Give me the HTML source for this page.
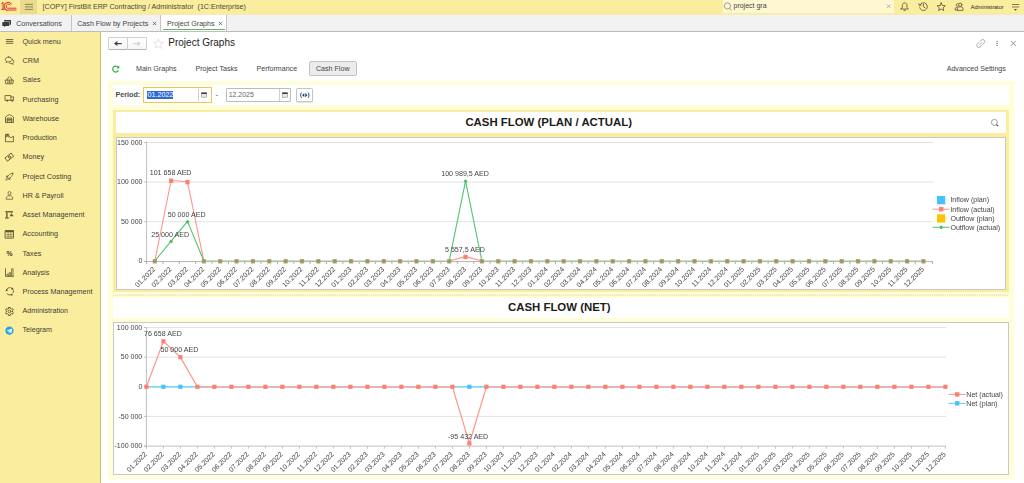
<!DOCTYPE html>
<html><head><meta charset="utf-8"><title>Project Graphs</title>
<style>
html,body{margin:0;padding:0;}
body{width:1024px;height:483px;overflow:hidden;background:#fff;font-family:"Liberation Sans", Arial, sans-serif;font-size:7.1px;color:#3b3b3b;position:relative;}
div,span{position:absolute;white-space:nowrap;box-sizing:border-box;}
svg{position:absolute;overflow:visible;}
#top{left:0;top:0;width:1024px;height:15px;background:linear-gradient(#fbed9e 0,#fbed9e 13.4px,#f6e595 14px,#f4ecc4 14.6px,#f2f2f2 15px);}
#hamb{left:20px;top:0;width:17px;height:14px;background:#eadb8e;}
#ttl{left:42.5px;top:3px;font-size:7.15px;color:#4a4a3a;line-height:8px;}
#search{left:723px;top:0;width:171px;height:13px;background:#fef7d1;}
#stext{left:733.5px;top:2.0px;font-size:7px;line-height:8px;color:#444;}
#adm{left:970.7px;top:3.6px;font-size:5.6px;line-height:7px;color:#1e1e1e;}
#tabs{left:0;top:15px;width:1024px;height:17px;background:#f2f2f2;border-bottom:1px solid #bdbdbd;}
.tsep{top:15px;width:1px;height:16px;background:#c4c4c4;}
#tabact{left:161.4px;top:15px;width:64.6px;height:16px;background:#fff;}
#tabul{left:163px;top:28.8px;width:62px;height:1.6px;background:#5db761;}
.tt{top:19.8px;font-size:7.15px;line-height:8px;color:#444;}
#side{left:0;top:32px;width:100px;height:451px;background:#fbed9e;}
#sideb{left:100px;top:32px;width:1px;height:451px;background:#c9ba6c;}
.si{left:22.5px;font-size:7.2px;line-height:10px;height:10px;color:#403e34;}
.sic{left:3.1px;}
#nav{left:107.5px;top:37px;width:39px;height:13px;border:1px solid #d0d0d0;border-bottom-color:#b4b4b4;border-radius:1.5px;background:linear-gradient(#fff,#f6f6f6);}
#navd{left:127.3px;top:37.5px;width:1px;height:12px;background:#d0d0d0;}
#ptitle{left:168.3px;top:36.3px;font-size:10px;line-height:13px;color:#222;}
.pt{top:64.6px;font-size:7.1px;line-height:8px;color:#444;}
#cfbtn{left:309px;top:61px;width:48px;height:15px;background:#ececec;border:1px solid #c2c2c2;border-radius:2px;}
#y1{left:108px;top:81px;width:906px;height:398px;background:#fffed9;}
#prow{left:113px;top:85px;width:896px;height:20px;background:#fff;}
#plabel{left:115.5px;top:91px;font-size:7.2px;line-height:8px;font-weight:bold;color:#4a4a4a;}
#in1{left:143.2px;top:87px;width:69px;height:16px;border:1.2px solid #f4c544;background:#fff;border-radius:0.5px;}
#in1s{left:147px;top:90.7px;width:26px;height:8.3px;background:#2f6ad0;}
#in1t{left:147.6px;top:91px;font-size:7.2px;line-height:8px;color:#fff;}
#in1d{left:198.3px;top:89px;width:1px;height:12px;background:#cfcfcf;}
#dash{left:215.5px;top:90.5px;font-size:7.2px;line-height:8px;}
#in2{left:226px;top:88.2px;width:64.7px;height:13.6px;border:1px solid #bcbcbc;background:#fff;border-radius:1px;}
#in2t{left:228.7px;top:91px;font-size:6.95px;line-height:8px;color:#666;}
#in2d{left:279.4px;top:89px;width:1px;height:12px;background:#cfcfcf;}
#pbtn{left:296.3px;top:87.5px;width:16.5px;height:14px;border:1px solid #c3c3c3;border-radius:1.5px;background:#fff;box-shadow:0 0.6px 0.5px rgba(0,0,0,.2);}
#f1{left:113px;top:110px;width:896px;height:182px;background:#fced9e;}
#t1{left:116px;top:112.4px;width:889.5px;height:20.2px;background:#fff;}
#t1t{left:465.4px;top:115.5px;font-size:11.4px;line-height:13px;font-weight:bold;color:#1c1c1c;}
#c1{left:115.5px;top:137.2px;width:890.3px;height:152.6px;background:#fff;border:1px solid #c8c8c8;}
#dots{left:113px;top:294.5px;width:896px;height:1.4px;background:repeating-linear-gradient(90deg,#e4dfb6 0 1.25px,#fffed9 1.25px 2.133px);}
#t2{left:113px;top:297.6px;width:896px;height:20.2px;background:#fff;}
#t2t{left:508px;top:300.5px;font-size:11.4px;line-height:13px;font-weight:bold;color:#1c1c1c;}
#c2{left:113px;top:322.3px;width:895.8px;height:152.3px;background:#fff;border:1px solid #c8c8c8;}
text.ax{font-size:7.05px;fill:#444;}
text.dl{font-size:7.1px;fill:#444;}
text.lg{font-size:7.1px;fill:#444;}
</style></head><body>
<div id="top"></div><div id="hamb"></div>
<div id="ttl">[COPY] FirstBit ERP Contracting / Administrator&nbsp; (1C:Enterprise)</div>
<div id="search"></div><div id="stext">project gra</div><div id="adm">Administrator</div>
<div id="tabs"></div>
<div class="tsep" style="left:71px"></div><div class="tsep" style="left:160.4px"></div><div class="tsep" style="left:226px"></div>
<div id="tabact"></div><div id="tabul"></div>
<div class="tt" style="left:16.2px">Conversations</div>
<div class="tt" style="left:77.2px">Cash Flow by Projects</div>
<div class="tt" style="left:167px">Project Graphs</div>
<div id="side"></div><div id="sideb"></div>
<div class="si" style="top:37.00px">Quick menu</div>
<svg class="sic" style="top:35.00px" width="12.9" height="12.9" viewBox="0 0 14 14"><path d="M3.1 4.95H11.1M3.1 6.97H11.1M3.1 9.0H11.1" fill="none" stroke="#5b5530" stroke-width="0.95"/></svg>
<div class="si" style="top:56.23px">CRM</div>
<svg class="sic" style="top:54.43px" width="12.9" height="12.9" viewBox="0 0 14 14"><path d="M6.2 3.3C8.4 3.3 9.9 4.5 9.9 6.0C9.9 7.5 8.4 8.6 6.2 8.6C5.7 8.6 5.3 8.55 4.9 8.45L3.3 9.4L3.8 7.9C3 7.4 2.5 6.8 2.5 6.0C2.5 4.5 4 3.3 6.2 3.3Z" fill="none" stroke="#5b5530" stroke-width="0.9" stroke-linecap="round" stroke-linejoin="round"/><path d="M10.4 6.2C11.2 6.6 11.7 7.3 11.7 8.1C11.7 8.9 11.3 9.5 10.6 9.9L11.1 11.2L9.5 10.4C8.6 10.6 7.4 10.4 6.7 9.6" fill="none" stroke="#5b5530" stroke-width="0.9" stroke-linecap="round" stroke-linejoin="round"/></svg>
<div class="si" style="top:75.46px">Sales</div>
<svg class="sic" style="top:74.06px" width="12.9" height="12.9" viewBox="0 0 14 14"><path d="M2.8 6.6H11.3L10.7 10.6H3.4Z" fill="none" stroke="#5b5530" stroke-width="0.9" stroke-linecap="round" stroke-linejoin="round"/><path d="M4.3 6.4L6.2 3.2M9.8 6.4L7.9 3.2M5.3 7.4V9.8M7.05 7.4V9.8M8.8 7.4V9.8" fill="none" stroke="#5b5530" stroke-width="0.9" stroke-linecap="round" stroke-linejoin="round"/></svg>
<div class="si" style="top:94.69px">Purchasing</div>
<svg class="sic" style="top:92.49px" width="12.9" height="12.9" viewBox="0 0 14 14"><path d="M2.6 3.9H8.6V9H2.6ZM8.6 5.3H11.5V9H8.6" fill="none" stroke="#5b5530" stroke-width="0.9" stroke-linecap="round" stroke-linejoin="round"/><circle cx="4.6" cy="9.4" r="1" fill="#5b5530"/><circle cx="10.1" cy="9.4" r="1" fill="#5b5530"/></svg>
<div class="si" style="top:113.92px">Warehouse</div>
<svg class="sic" style="top:111.92px" width="12.9" height="12.9" viewBox="0 0 14 14"><path d="M2.7 11V5.6C4 4.2 5.5 3.3 7.05 2.9C8.6 3.3 10.1 4.2 11.4 5.6V11Z" fill="none" stroke="#5b5530" stroke-width="0.9" stroke-linecap="round" stroke-linejoin="round"/><path d="M4.6 11V6.6H9.5V11M4.6 8.1H9.5M4.6 9.6H9.5" fill="none" stroke="#5b5530" stroke-width="0.9" stroke-linecap="round" stroke-linejoin="round"/></svg>
<div class="si" style="top:133.15px">Production</div>
<svg class="sic" style="top:131.35px" width="12.9" height="12.9" viewBox="0 0 14 14"><path d="M2.7 11.2V3.6H6.3V5.4L8.6 7.3L11.4 5.7V11.2Z" fill="none" stroke="#5b5530" stroke-width="0.9" stroke-linecap="round" stroke-linejoin="round"/><path d="M4.1 3.6V5.2M5.2 3.6V5.2M2.7 6.6L4.5 5.3L6.3 6.6" fill="none" stroke="#5b5530" stroke-width="0.9" stroke-linecap="round" stroke-linejoin="round"/></svg>
<div class="si" style="top:152.38px">Money</div>
<svg class="sic" style="top:150.18px" width="12.9" height="12.9" viewBox="0 0 14 14"><g transform="translate(0 0.6) rotate(-38 7 7)"><rect x="2.9" y="4.8" width="8.2" height="4.4" fill="none" stroke="#5b5530" stroke-width="0.9" stroke-linecap="round" stroke-linejoin="round"/><circle cx="7" cy="7" r="1.2" fill="none" stroke="#5b5530" stroke-width="0.9" stroke-linecap="round" stroke-linejoin="round"/></g></svg>
<div class="si" style="top:171.61px">Project Costing</div>
<svg class="sic" style="top:169.81px" width="12.9" height="12.9" viewBox="0 0 14 14"><g transform="translate(0.5 0.9) scale(0.9)"><path d="M11.3 2.9C9.3 3 7.6 3.8 6.2 5.4L4.5 7.6L6.5 9.6L8.7 7.9C10.3 6.5 11.2 4.9 11.3 2.9Z" fill="none" stroke="#5b5530" stroke-width="0.9" stroke-linecap="round" stroke-linejoin="round"/><path d="M5.6 6.2L3.1 6.6L4.4 7.7M7.9 8.5L7.5 11L6.4 9.7M4.6 9.5L3 11.1M3.6 8.7L2.7 9.6M5.4 10.4L4.5 11.3" fill="none" stroke="#5b5530" stroke-width="0.9" stroke-linecap="round" stroke-linejoin="round"/></g></svg>
<div class="si" style="top:190.84px">HR &amp; Payroll</div>
<svg class="sic" style="top:188.84px" width="12.9" height="12.9" viewBox="0 0 14 14"><circle cx="7.05" cy="4.5" r="1.7" fill="none" stroke="#5b5530" stroke-width="0.8"/><path d="M3.6 11.1V8.9L5.3 7.4H8.8L10.5 8.9V11.1Z" fill="none" stroke="#5b5530" stroke-width="0.8" stroke-linejoin="round"/></svg>
<div class="si" style="top:210.07px">Asset Management</div>
<svg class="sic" style="top:208.07px" width="12.9" height="12.9" viewBox="0 0 14 14"><path d="M2.5 3.4H10.8V4.8H2.5Z" fill="#5b5530"/><path d="M4.2 4.8V10.3" fill="none" stroke="#5b5530" stroke-width="1.5"/><path d="M2.3 10.2H6.3V11.5H2.3Z" fill="#5b5530"/><path d="M9.1 4.8V7" fill="none" stroke="#5b5530" stroke-width="0.7"/><path d="M7 8.9L8.5 6.9H9.9L11.6 8.9Z" fill="#5b5530"/></svg>
<div class="si" style="top:229.30px">Accounting</div>
<svg class="sic" style="top:227.30px" width="12.9" height="12.9" viewBox="0 0 14 14"><g transform="translate(0 0.95)"><rect x="2.7" y="2.9" width="8.7" height="8.3" fill="none" stroke="#5b5530" stroke-width="0.9" stroke-linecap="round" stroke-linejoin="round"/><rect x="2.7" y="2.9" width="8.7" height="1.9" fill="#5b5530"/><path d="M2.7 7H11.4M2.7 9.1H11.4M5.6 4.8V11.2M8.5 4.8V11.2" fill="none" stroke="#5b5530" stroke-width="0.55"/></g></svg>
<div class="si" style="top:248.53px">Taxes</div>
<svg class="sic" style="top:246.53px" width="12.9" height="12.9" viewBox="0 0 14 14"><text x="7.1" y="10.0" text-anchor="middle" font-size="7.4" font-weight="bold" fill="#3d3820">%</text></svg>
<div class="si" style="top:267.76px">Analysis</div>
<svg class="sic" style="top:265.76px" width="12.9" height="12.9" viewBox="0 0 14 14"><path d="M2.7 2.9V11.2H11.4" fill="none" stroke="#5b5530" stroke-width="0.9" stroke-linecap="round" stroke-linejoin="round"/><path d="M4.3 11.2V8.8H5.8V11.2M6.7 11.2V7.2H8.2V11.2M9.3 11.2V3.1H10.9V11.2" fill="none" stroke="#5b5530" stroke-width="0.8"/></svg>
<div class="si" style="top:286.99px">Process Management</div>
<svg class="sic" style="top:284.49px" width="12.9" height="12.9" viewBox="0 0 14 14"><g transform="translate(0.3 0.9)"><path d="M3.6 5.0A4.1 4.1 0 0 1 7.4 2.9" fill="none" stroke="#5b5530" stroke-width="0.9" stroke-linecap="round" stroke-linejoin="round"/><path d="M9.9 4.1A4.1 4.1 0 0 1 10.9 8.4" fill="none" stroke="#5b5530" stroke-width="0.9" stroke-linecap="round" stroke-linejoin="round"/><path d="M8.9 10.7A4.1 4.1 0 0 1 4.1 9.9" fill="none" stroke="#5b5530" stroke-width="0.9" stroke-linecap="round" stroke-linejoin="round"/><path d="M2.6 7.2L3.2 4.2L5.4 5.9ZM9.0 2.3L11.1 4.5L8.4 5.2ZM9.9 9.2L10.1 11.9L7.6 11.1Z" fill="#5b5530"/></g></svg>
<div class="si" style="top:306.22px">Administration</div>
<svg class="sic" style="top:304.72px" width="12.9" height="12.9" viewBox="0 0 14 14"><path d="M6.14 2.70L7.96 2.70L8.17 3.90L9.18 4.48L10.32 4.06L11.23 5.64L10.30 6.42L10.30 7.58L11.23 8.36L10.32 9.94L9.18 9.52L8.17 10.10L7.96 11.30L6.14 11.30L5.93 10.10L4.92 9.52L3.78 9.94L2.87 8.36L3.80 7.58L3.80 6.42L2.87 5.64L3.78 4.06L4.92 4.48L5.93 3.90Z" fill="none" stroke="#5b5530" stroke-width="1.05" stroke-linecap="round" stroke-linejoin="round"/><circle cx="7.05" cy="7" r="1.5" fill="none" stroke="#5b5530" stroke-width="0.9" stroke-linecap="round" stroke-linejoin="round"/></svg>
<div class="si" style="top:325.45px">Telegram</div>
<svg class="sic" style="top:324.05px" width="12.9" height="12.9" viewBox="0 0 14 14"><circle cx="7" cy="7.2" r="4.5" fill="#2aa3e3"/><path d="M4.1 7.1L10 4.8L9 10L7.3 8.8L6.3 9.8L6.1 8.2L8.9 5.8L5.6 7.8Z" fill="#fff"/></svg>
<div id="nav"></div><div id="navd"></div>
<div id="ptitle">Project Graphs</div>
<div class="pt" style="left:136px">Main Graphs</div>
<div class="pt" style="left:195.5px">Project Tasks</div>
<div class="pt" style="left:256.5px">Performance</div>
<div id="cfbtn"></div>
<div class="pt" style="left:316px">Cash Flow</div>
<div class="pt" style="left:946.7px">Advanced Settings</div>
<div id="y1"></div>
<div id="prow"></div>
<div id="plabel">Period:</div>
<div id="in1"></div><div id="in1s"></div><div id="in1t">01.2022</div><div id="in1d"></div>
<div id="dash">-</div>
<div id="in2"></div><div id="in2t">12.2025</div><div id="in2d"></div>
<div id="pbtn"></div>
<div id="f1"></div><div id="t1"></div><div id="t1t">CASH FLOW (PLAN / ACTUAL)</div>
<div id="c1"></div>
<div id="t2"></div><div id="t2t">CASH FLOW (NET)</div>
<div id="c2"></div>
<svg id="charts" width="1024" height="483" viewBox="0 0 1024 483" style="left:0;top:0;will-change:transform;font-family:"Liberation Sans", Arial, sans-serif">
<line x1="146.6" y1="221.7" x2="933" y2="221.7" stroke="#dadada" stroke-width="0.8"/>
<line x1="146.6" y1="182.1" x2="933" y2="182.1" stroke="#dadada" stroke-width="0.8"/>
<line x1="146.6" y1="142.5" x2="933" y2="142.5" stroke="#dadada" stroke-width="0.8"/>
<line x1="146.6" y1="141.5" x2="146.6" y2="263" stroke="#b8b8b8" stroke-width="0.9"/>
<line x1="144.1" y1="261.3" x2="146.6" y2="261.3" stroke="#b8b8b8" stroke-width="0.9"/>
<line x1="144.1" y1="221.7" x2="146.6" y2="221.7" stroke="#b8b8b8" stroke-width="0.9"/>
<line x1="144.1" y1="182.1" x2="146.6" y2="182.1" stroke="#b8b8b8" stroke-width="0.9"/>
<line x1="144.1" y1="142.5" x2="146.6" y2="142.5" stroke="#b8b8b8" stroke-width="0.9"/>
<line x1="146.60" y1="261.3" x2="146.60" y2="264.1" stroke="#a8a8a8" stroke-width="0.9"/>
<line x1="162.95" y1="261.3" x2="162.95" y2="264.1" stroke="#a8a8a8" stroke-width="0.9"/>
<line x1="179.31" y1="261.3" x2="179.31" y2="264.1" stroke="#a8a8a8" stroke-width="0.9"/>
<line x1="195.66" y1="261.3" x2="195.66" y2="264.1" stroke="#a8a8a8" stroke-width="0.9"/>
<line x1="212.02" y1="261.3" x2="212.02" y2="264.1" stroke="#a8a8a8" stroke-width="0.9"/>
<line x1="228.38" y1="261.3" x2="228.38" y2="264.1" stroke="#a8a8a8" stroke-width="0.9"/>
<line x1="244.73" y1="261.3" x2="244.73" y2="264.1" stroke="#a8a8a8" stroke-width="0.9"/>
<line x1="261.08" y1="261.3" x2="261.08" y2="264.1" stroke="#a8a8a8" stroke-width="0.9"/>
<line x1="277.44" y1="261.3" x2="277.44" y2="264.1" stroke="#a8a8a8" stroke-width="0.9"/>
<line x1="293.79" y1="261.3" x2="293.79" y2="264.1" stroke="#a8a8a8" stroke-width="0.9"/>
<line x1="310.15" y1="261.3" x2="310.15" y2="264.1" stroke="#a8a8a8" stroke-width="0.9"/>
<line x1="326.50" y1="261.3" x2="326.50" y2="264.1" stroke="#a8a8a8" stroke-width="0.9"/>
<line x1="342.86" y1="261.3" x2="342.86" y2="264.1" stroke="#a8a8a8" stroke-width="0.9"/>
<line x1="359.22" y1="261.3" x2="359.22" y2="264.1" stroke="#a8a8a8" stroke-width="0.9"/>
<line x1="375.57" y1="261.3" x2="375.57" y2="264.1" stroke="#a8a8a8" stroke-width="0.9"/>
<line x1="391.93" y1="261.3" x2="391.93" y2="264.1" stroke="#a8a8a8" stroke-width="0.9"/>
<line x1="408.28" y1="261.3" x2="408.28" y2="264.1" stroke="#a8a8a8" stroke-width="0.9"/>
<line x1="424.63" y1="261.3" x2="424.63" y2="264.1" stroke="#a8a8a8" stroke-width="0.9"/>
<line x1="440.99" y1="261.3" x2="440.99" y2="264.1" stroke="#a8a8a8" stroke-width="0.9"/>
<line x1="457.35" y1="261.3" x2="457.35" y2="264.1" stroke="#a8a8a8" stroke-width="0.9"/>
<line x1="473.70" y1="261.3" x2="473.70" y2="264.1" stroke="#a8a8a8" stroke-width="0.9"/>
<line x1="490.05" y1="261.3" x2="490.05" y2="264.1" stroke="#a8a8a8" stroke-width="0.9"/>
<line x1="506.41" y1="261.3" x2="506.41" y2="264.1" stroke="#a8a8a8" stroke-width="0.9"/>
<line x1="522.76" y1="261.3" x2="522.76" y2="264.1" stroke="#a8a8a8" stroke-width="0.9"/>
<line x1="539.12" y1="261.3" x2="539.12" y2="264.1" stroke="#a8a8a8" stroke-width="0.9"/>
<line x1="555.48" y1="261.3" x2="555.48" y2="264.1" stroke="#a8a8a8" stroke-width="0.9"/>
<line x1="571.83" y1="261.3" x2="571.83" y2="264.1" stroke="#a8a8a8" stroke-width="0.9"/>
<line x1="588.19" y1="261.3" x2="588.19" y2="264.1" stroke="#a8a8a8" stroke-width="0.9"/>
<line x1="604.54" y1="261.3" x2="604.54" y2="264.1" stroke="#a8a8a8" stroke-width="0.9"/>
<line x1="620.89" y1="261.3" x2="620.89" y2="264.1" stroke="#a8a8a8" stroke-width="0.9"/>
<line x1="637.25" y1="261.3" x2="637.25" y2="264.1" stroke="#a8a8a8" stroke-width="0.9"/>
<line x1="653.61" y1="261.3" x2="653.61" y2="264.1" stroke="#a8a8a8" stroke-width="0.9"/>
<line x1="669.96" y1="261.3" x2="669.96" y2="264.1" stroke="#a8a8a8" stroke-width="0.9"/>
<line x1="686.32" y1="261.3" x2="686.32" y2="264.1" stroke="#a8a8a8" stroke-width="0.9"/>
<line x1="702.67" y1="261.3" x2="702.67" y2="264.1" stroke="#a8a8a8" stroke-width="0.9"/>
<line x1="719.03" y1="261.3" x2="719.03" y2="264.1" stroke="#a8a8a8" stroke-width="0.9"/>
<line x1="735.38" y1="261.3" x2="735.38" y2="264.1" stroke="#a8a8a8" stroke-width="0.9"/>
<line x1="751.74" y1="261.3" x2="751.74" y2="264.1" stroke="#a8a8a8" stroke-width="0.9"/>
<line x1="768.09" y1="261.3" x2="768.09" y2="264.1" stroke="#a8a8a8" stroke-width="0.9"/>
<line x1="784.45" y1="261.3" x2="784.45" y2="264.1" stroke="#a8a8a8" stroke-width="0.9"/>
<line x1="800.80" y1="261.3" x2="800.80" y2="264.1" stroke="#a8a8a8" stroke-width="0.9"/>
<line x1="817.16" y1="261.3" x2="817.16" y2="264.1" stroke="#a8a8a8" stroke-width="0.9"/>
<line x1="833.51" y1="261.3" x2="833.51" y2="264.1" stroke="#a8a8a8" stroke-width="0.9"/>
<line x1="849.87" y1="261.3" x2="849.87" y2="264.1" stroke="#a8a8a8" stroke-width="0.9"/>
<line x1="866.22" y1="261.3" x2="866.22" y2="264.1" stroke="#a8a8a8" stroke-width="0.9"/>
<line x1="882.58" y1="261.3" x2="882.58" y2="264.1" stroke="#a8a8a8" stroke-width="0.9"/>
<line x1="898.93" y1="261.3" x2="898.93" y2="264.1" stroke="#a8a8a8" stroke-width="0.9"/>
<line x1="915.29" y1="261.3" x2="915.29" y2="264.1" stroke="#a8a8a8" stroke-width="0.9"/>
<line x1="932.60" y1="261.3" x2="932.60" y2="264.1" stroke="#a8a8a8" stroke-width="0.9"/>
<line x1="113" y1="295.2" x2="1009" y2="295.2" stroke="#dedaae" stroke-width="1.3" stroke-dasharray="1.2 0.933"/>
<text x="142.5" y="263.4" text-anchor="end" class="ax">0</text>
<text x="142.5" y="223.8" text-anchor="end" class="ax">50 000</text>
<text x="142.5" y="184.2" text-anchor="end" class="ax">100 000</text>
<text x="142.5" y="144.6" text-anchor="end" class="ax">150 000</text>
<text transform="translate(155.80,269.8) rotate(-45)" text-anchor="end" class="ax">01.2022</text>
<text transform="translate(172.15,269.8) rotate(-45)" text-anchor="end" class="ax">02.2022</text>
<text transform="translate(188.51,269.8) rotate(-45)" text-anchor="end" class="ax">03.2022</text>
<text transform="translate(204.86,269.8) rotate(-45)" text-anchor="end" class="ax">04.2022</text>
<text transform="translate(221.22,269.8) rotate(-45)" text-anchor="end" class="ax">05.2022</text>
<text transform="translate(237.57,269.8) rotate(-45)" text-anchor="end" class="ax">06.2022</text>
<text transform="translate(253.93,269.8) rotate(-45)" text-anchor="end" class="ax">07.2022</text>
<text transform="translate(270.28,269.8) rotate(-45)" text-anchor="end" class="ax">08.2022</text>
<text transform="translate(286.64,269.8) rotate(-45)" text-anchor="end" class="ax">09.2022</text>
<text transform="translate(303.00,269.8) rotate(-45)" text-anchor="end" class="ax">10.2022</text>
<text transform="translate(319.35,269.8) rotate(-45)" text-anchor="end" class="ax">11.2022</text>
<text transform="translate(335.70,269.8) rotate(-45)" text-anchor="end" class="ax">12.2022</text>
<text transform="translate(352.06,269.8) rotate(-45)" text-anchor="end" class="ax">01.2023</text>
<text transform="translate(368.41,269.8) rotate(-45)" text-anchor="end" class="ax">02.2023</text>
<text transform="translate(384.77,269.8) rotate(-45)" text-anchor="end" class="ax">03.2023</text>
<text transform="translate(401.12,269.8) rotate(-45)" text-anchor="end" class="ax">04.2023</text>
<text transform="translate(417.48,269.8) rotate(-45)" text-anchor="end" class="ax">05.2023</text>
<text transform="translate(433.84,269.8) rotate(-45)" text-anchor="end" class="ax">06.2023</text>
<text transform="translate(450.19,269.8) rotate(-45)" text-anchor="end" class="ax">07.2023</text>
<text transform="translate(466.54,269.8) rotate(-45)" text-anchor="end" class="ax">08.2023</text>
<text transform="translate(482.90,269.8) rotate(-45)" text-anchor="end" class="ax">09.2023</text>
<text transform="translate(499.25,269.8) rotate(-45)" text-anchor="end" class="ax">10.2023</text>
<text transform="translate(515.61,269.8) rotate(-45)" text-anchor="end" class="ax">11.2023</text>
<text transform="translate(531.97,269.8) rotate(-45)" text-anchor="end" class="ax">12.2023</text>
<text transform="translate(548.32,269.8) rotate(-45)" text-anchor="end" class="ax">01.2024</text>
<text transform="translate(564.67,269.8) rotate(-45)" text-anchor="end" class="ax">02.2024</text>
<text transform="translate(581.03,269.8) rotate(-45)" text-anchor="end" class="ax">03.2024</text>
<text transform="translate(597.38,269.8) rotate(-45)" text-anchor="end" class="ax">04.2024</text>
<text transform="translate(613.74,269.8) rotate(-45)" text-anchor="end" class="ax">05.2024</text>
<text transform="translate(630.10,269.8) rotate(-45)" text-anchor="end" class="ax">06.2024</text>
<text transform="translate(646.45,269.8) rotate(-45)" text-anchor="end" class="ax">07.2024</text>
<text transform="translate(662.80,269.8) rotate(-45)" text-anchor="end" class="ax">08.2024</text>
<text transform="translate(679.16,269.8) rotate(-45)" text-anchor="end" class="ax">09.2024</text>
<text transform="translate(695.51,269.8) rotate(-45)" text-anchor="end" class="ax">10.2024</text>
<text transform="translate(711.87,269.8) rotate(-45)" text-anchor="end" class="ax">11.2024</text>
<text transform="translate(728.23,269.8) rotate(-45)" text-anchor="end" class="ax">12.2024</text>
<text transform="translate(744.58,269.8) rotate(-45)" text-anchor="end" class="ax">01.2025</text>
<text transform="translate(760.93,269.8) rotate(-45)" text-anchor="end" class="ax">02.2025</text>
<text transform="translate(777.29,269.8) rotate(-45)" text-anchor="end" class="ax">03.2025</text>
<text transform="translate(793.64,269.8) rotate(-45)" text-anchor="end" class="ax">04.2025</text>
<text transform="translate(810.00,269.8) rotate(-45)" text-anchor="end" class="ax">05.2025</text>
<text transform="translate(826.36,269.8) rotate(-45)" text-anchor="end" class="ax">06.2025</text>
<text transform="translate(842.71,269.8) rotate(-45)" text-anchor="end" class="ax">07.2025</text>
<text transform="translate(859.06,269.8) rotate(-45)" text-anchor="end" class="ax">08.2025</text>
<text transform="translate(875.42,269.8) rotate(-45)" text-anchor="end" class="ax">09.2025</text>
<text transform="translate(891.77,269.8) rotate(-45)" text-anchor="end" class="ax">10.2025</text>
<text transform="translate(908.13,269.8) rotate(-45)" text-anchor="end" class="ax">11.2025</text>
<text transform="translate(924.49,269.8) rotate(-45)" text-anchor="end" class="ax">12.2025</text>
<path d="M203.86 260.75H220.22M220.22 260.75H236.57M236.57 260.75H252.93M252.93 260.75H269.28M269.28 260.75H285.64M285.64 260.75H302.00M302.00 260.75H318.35M318.35 260.75H334.70M334.70 260.75H351.06M351.06 260.75H367.41M367.41 260.75H383.77M383.77 260.75H400.12M400.12 260.75H416.48M416.48 260.75H432.84M432.84 260.75H449.19M481.90 260.75H498.25M498.25 260.75H514.61M514.61 260.75H530.97M530.97 260.75H547.32M547.32 260.75H563.67M563.67 260.75H580.03M580.03 260.75H596.38M596.38 260.75H612.74M612.74 260.75H629.10M629.10 260.75H645.45M645.45 260.75H661.80M661.80 260.75H678.16M678.16 260.75H694.51M694.51 260.75H710.87M710.87 260.75H727.23M727.23 260.75H743.58M743.58 260.75H759.93M759.93 260.75H776.29M776.29 260.75H792.64M792.64 260.75H809.00M809.00 260.75H825.36M825.36 260.75H841.71M841.71 260.75H858.06M858.06 260.75H874.42M874.42 260.75H890.77M890.77 260.75H907.13M907.13 260.75H923.49" fill="none" stroke="#bcd7ad" stroke-width="1.1"/>
<line x1="144.6" y1="261.6" x2="933" y2="261.6" stroke="#a9aea5" stroke-width="0.9"/>
<path d="M154.80 261.00L171.15 180.49M171.15 180.49L187.51 181.80M187.51 181.80L203.86 261.00M449.19 261.00L465.54 256.60M465.54 256.60L481.90 261.00" fill="none" stroke="#fb958b" stroke-width="1.1" stroke-linejoin="round"/>
<path d="M154.80 261.00L171.15 241.20M171.15 241.20L187.51 221.40M187.51 221.40L203.86 261.00M449.19 261.00L465.54 181.02M465.54 181.02L481.90 261.00" fill="none" stroke="#55c26b" stroke-width="1.1" stroke-linejoin="round"/>
<rect x="152.70" y="259.10" width="4.2" height="4.4" fill="#fb8174"/>
<rect x="169.05" y="178.59" width="4.2" height="4.4" fill="#fb8174"/>
<rect x="185.41" y="179.90" width="4.2" height="4.4" fill="#fb8174"/>
<rect x="201.76" y="259.10" width="4.2" height="4.4" fill="#fb8174"/>
<rect x="218.12" y="259.10" width="4.2" height="4.4" fill="#fb8174"/>
<rect x="234.47" y="259.10" width="4.2" height="4.4" fill="#fb8174"/>
<rect x="250.83" y="259.10" width="4.2" height="4.4" fill="#fb8174"/>
<rect x="267.18" y="259.10" width="4.2" height="4.4" fill="#fb8174"/>
<rect x="283.54" y="259.10" width="4.2" height="4.4" fill="#fb8174"/>
<rect x="299.89" y="259.10" width="4.2" height="4.4" fill="#fb8174"/>
<rect x="316.25" y="259.10" width="4.2" height="4.4" fill="#fb8174"/>
<rect x="332.60" y="259.10" width="4.2" height="4.4" fill="#fb8174"/>
<rect x="348.96" y="259.10" width="4.2" height="4.4" fill="#fb8174"/>
<rect x="365.31" y="259.10" width="4.2" height="4.4" fill="#fb8174"/>
<rect x="381.67" y="259.10" width="4.2" height="4.4" fill="#fb8174"/>
<rect x="398.02" y="259.10" width="4.2" height="4.4" fill="#fb8174"/>
<rect x="414.38" y="259.10" width="4.2" height="4.4" fill="#fb8174"/>
<rect x="430.74" y="259.10" width="4.2" height="4.4" fill="#fb8174"/>
<rect x="447.09" y="259.10" width="4.2" height="4.4" fill="#fb8174"/>
<rect x="463.44" y="254.70" width="4.2" height="4.4" fill="#fb8174"/>
<rect x="479.80" y="259.10" width="4.2" height="4.4" fill="#fb8174"/>
<rect x="496.15" y="259.10" width="4.2" height="4.4" fill="#fb8174"/>
<rect x="512.51" y="259.10" width="4.2" height="4.4" fill="#fb8174"/>
<rect x="528.87" y="259.10" width="4.2" height="4.4" fill="#fb8174"/>
<rect x="545.22" y="259.10" width="4.2" height="4.4" fill="#fb8174"/>
<rect x="561.57" y="259.10" width="4.2" height="4.4" fill="#fb8174"/>
<rect x="577.93" y="259.10" width="4.2" height="4.4" fill="#fb8174"/>
<rect x="594.28" y="259.10" width="4.2" height="4.4" fill="#fb8174"/>
<rect x="610.64" y="259.10" width="4.2" height="4.4" fill="#fb8174"/>
<rect x="627.00" y="259.10" width="4.2" height="4.4" fill="#fb8174"/>
<rect x="643.35" y="259.10" width="4.2" height="4.4" fill="#fb8174"/>
<rect x="659.70" y="259.10" width="4.2" height="4.4" fill="#fb8174"/>
<rect x="676.06" y="259.10" width="4.2" height="4.4" fill="#fb8174"/>
<rect x="692.41" y="259.10" width="4.2" height="4.4" fill="#fb8174"/>
<rect x="708.77" y="259.10" width="4.2" height="4.4" fill="#fb8174"/>
<rect x="725.12" y="259.10" width="4.2" height="4.4" fill="#fb8174"/>
<rect x="741.48" y="259.10" width="4.2" height="4.4" fill="#fb8174"/>
<rect x="757.83" y="259.10" width="4.2" height="4.4" fill="#fb8174"/>
<rect x="774.19" y="259.10" width="4.2" height="4.4" fill="#fb8174"/>
<rect x="790.54" y="259.10" width="4.2" height="4.4" fill="#fb8174"/>
<rect x="806.90" y="259.10" width="4.2" height="4.4" fill="#fb8174"/>
<rect x="823.25" y="259.10" width="4.2" height="4.4" fill="#fb8174"/>
<rect x="839.61" y="259.10" width="4.2" height="4.4" fill="#fb8174"/>
<rect x="855.96" y="259.10" width="4.2" height="4.4" fill="#fb8174"/>
<rect x="872.32" y="259.10" width="4.2" height="4.4" fill="#fb8174"/>
<rect x="888.67" y="259.10" width="4.2" height="4.4" fill="#fb8174"/>
<rect x="905.03" y="259.10" width="4.2" height="4.4" fill="#fb8174"/>
<rect x="921.38" y="259.10" width="4.2" height="4.4" fill="#fb8174"/>
<path d="M154.80 259.25l2.05 2.05l-2.05 2.05l-2.05 -2.05z" fill="#4dbd64"/>
<path d="M171.15 239.45l2.05 2.05l-2.05 2.05l-2.05 -2.05z" fill="#4dbd64"/>
<path d="M187.51 219.65l2.05 2.05l-2.05 2.05l-2.05 -2.05z" fill="#4dbd64"/>
<path d="M203.86 259.25l2.05 2.05l-2.05 2.05l-2.05 -2.05z" fill="#4dbd64"/>
<path d="M220.22 259.25l2.05 2.05l-2.05 2.05l-2.05 -2.05z" fill="#4dbd64"/>
<path d="M236.57 259.25l2.05 2.05l-2.05 2.05l-2.05 -2.05z" fill="#4dbd64"/>
<path d="M252.93 259.25l2.05 2.05l-2.05 2.05l-2.05 -2.05z" fill="#4dbd64"/>
<path d="M269.28 259.25l2.05 2.05l-2.05 2.05l-2.05 -2.05z" fill="#4dbd64"/>
<path d="M285.64 259.25l2.05 2.05l-2.05 2.05l-2.05 -2.05z" fill="#4dbd64"/>
<path d="M302.00 259.25l2.05 2.05l-2.05 2.05l-2.05 -2.05z" fill="#4dbd64"/>
<path d="M318.35 259.25l2.05 2.05l-2.05 2.05l-2.05 -2.05z" fill="#4dbd64"/>
<path d="M334.70 259.25l2.05 2.05l-2.05 2.05l-2.05 -2.05z" fill="#4dbd64"/>
<path d="M351.06 259.25l2.05 2.05l-2.05 2.05l-2.05 -2.05z" fill="#4dbd64"/>
<path d="M367.41 259.25l2.05 2.05l-2.05 2.05l-2.05 -2.05z" fill="#4dbd64"/>
<path d="M383.77 259.25l2.05 2.05l-2.05 2.05l-2.05 -2.05z" fill="#4dbd64"/>
<path d="M400.12 259.25l2.05 2.05l-2.05 2.05l-2.05 -2.05z" fill="#4dbd64"/>
<path d="M416.48 259.25l2.05 2.05l-2.05 2.05l-2.05 -2.05z" fill="#4dbd64"/>
<path d="M432.84 259.25l2.05 2.05l-2.05 2.05l-2.05 -2.05z" fill="#4dbd64"/>
<path d="M449.19 259.25l2.05 2.05l-2.05 2.05l-2.05 -2.05z" fill="#4dbd64"/>
<path d="M465.54 179.27l2.05 2.05l-2.05 2.05l-2.05 -2.05z" fill="#4dbd64"/>
<path d="M481.90 259.25l2.05 2.05l-2.05 2.05l-2.05 -2.05z" fill="#4dbd64"/>
<path d="M498.25 259.25l2.05 2.05l-2.05 2.05l-2.05 -2.05z" fill="#4dbd64"/>
<path d="M514.61 259.25l2.05 2.05l-2.05 2.05l-2.05 -2.05z" fill="#4dbd64"/>
<path d="M530.97 259.25l2.05 2.05l-2.05 2.05l-2.05 -2.05z" fill="#4dbd64"/>
<path d="M547.32 259.25l2.05 2.05l-2.05 2.05l-2.05 -2.05z" fill="#4dbd64"/>
<path d="M563.67 259.25l2.05 2.05l-2.05 2.05l-2.05 -2.05z" fill="#4dbd64"/>
<path d="M580.03 259.25l2.05 2.05l-2.05 2.05l-2.05 -2.05z" fill="#4dbd64"/>
<path d="M596.38 259.25l2.05 2.05l-2.05 2.05l-2.05 -2.05z" fill="#4dbd64"/>
<path d="M612.74 259.25l2.05 2.05l-2.05 2.05l-2.05 -2.05z" fill="#4dbd64"/>
<path d="M629.10 259.25l2.05 2.05l-2.05 2.05l-2.05 -2.05z" fill="#4dbd64"/>
<path d="M645.45 259.25l2.05 2.05l-2.05 2.05l-2.05 -2.05z" fill="#4dbd64"/>
<path d="M661.80 259.25l2.05 2.05l-2.05 2.05l-2.05 -2.05z" fill="#4dbd64"/>
<path d="M678.16 259.25l2.05 2.05l-2.05 2.05l-2.05 -2.05z" fill="#4dbd64"/>
<path d="M694.51 259.25l2.05 2.05l-2.05 2.05l-2.05 -2.05z" fill="#4dbd64"/>
<path d="M710.87 259.25l2.05 2.05l-2.05 2.05l-2.05 -2.05z" fill="#4dbd64"/>
<path d="M727.23 259.25l2.05 2.05l-2.05 2.05l-2.05 -2.05z" fill="#4dbd64"/>
<path d="M743.58 259.25l2.05 2.05l-2.05 2.05l-2.05 -2.05z" fill="#4dbd64"/>
<path d="M759.93 259.25l2.05 2.05l-2.05 2.05l-2.05 -2.05z" fill="#4dbd64"/>
<path d="M776.29 259.25l2.05 2.05l-2.05 2.05l-2.05 -2.05z" fill="#4dbd64"/>
<path d="M792.64 259.25l2.05 2.05l-2.05 2.05l-2.05 -2.05z" fill="#4dbd64"/>
<path d="M809.00 259.25l2.05 2.05l-2.05 2.05l-2.05 -2.05z" fill="#4dbd64"/>
<path d="M825.36 259.25l2.05 2.05l-2.05 2.05l-2.05 -2.05z" fill="#4dbd64"/>
<path d="M841.71 259.25l2.05 2.05l-2.05 2.05l-2.05 -2.05z" fill="#4dbd64"/>
<path d="M858.06 259.25l2.05 2.05l-2.05 2.05l-2.05 -2.05z" fill="#4dbd64"/>
<path d="M874.42 259.25l2.05 2.05l-2.05 2.05l-2.05 -2.05z" fill="#4dbd64"/>
<path d="M890.77 259.25l2.05 2.05l-2.05 2.05l-2.05 -2.05z" fill="#4dbd64"/>
<path d="M907.13 259.25l2.05 2.05l-2.05 2.05l-2.05 -2.05z" fill="#4dbd64"/>
<path d="M923.49 259.25l2.05 2.05l-2.05 2.05l-2.05 -2.05z" fill="#4dbd64"/>
<text x="149.7" y="175.4" class="dl">101 658 AED</text>
<text x="167.7" y="217.0" class="dl">50 000 AED</text>
<text x="151.2" y="236.7" class="dl">25 000 AED</text>
<text x="441.2" y="175.9" class="dl">100 989,5 AED</text>
<text x="445" y="251.7" class="dl">5 557,5 AED</text>
<rect x="937" y="196" width="8.3" height="8.3" fill="#45c3fb"/>
<text x="950.4" y="202.4" class="lg">Inflow (plan)</text>
<line x1="932.5" y1="209.2" x2="949.6" y2="209.2" stroke="#fb958b" stroke-width="1"/>
<rect x="939" y="207" width="4.4" height="4.4" fill="#fa8072"/>
<text x="950.4" y="211.5" class="lg">Inflow (actual)</text>
<rect x="937" y="214.3" width="8.3" height="8.3" fill="#ffc107"/>
<text x="950.4" y="220.6" class="lg">Outflow (plan)</text>
<line x1="932.5" y1="227.3" x2="949.6" y2="227.3" stroke="#55c26b" stroke-width="1"/>
<path d="M941.2 225.2l2.1 2.1l-2.1 2.1l-2.1 -2.1z" fill="#4dbd64"/>
<text x="950.4" y="229.7" class="lg">Outflow (actual)</text>
<line x1="146.4" y1="416.4" x2="946" y2="416.4" stroke="#dadada" stroke-width="0.8"/>
<line x1="146.4" y1="386.8" x2="946" y2="386.8" stroke="#dadada" stroke-width="0.8"/>
<line x1="146.4" y1="357.2" x2="946" y2="357.2" stroke="#dadada" stroke-width="0.8"/>
<line x1="146.4" y1="327.5" x2="946" y2="327.5" stroke="#dadada" stroke-width="0.8"/>
<line x1="146.4" y1="327" x2="146.4" y2="448.5" stroke="#b8b8b8" stroke-width="0.9"/>
<line x1="143.9" y1="446.1" x2="946" y2="446.1" stroke="#b8b8b8" stroke-width="0.9"/>
<line x1="143.9" y1="446.1" x2="146.4" y2="446.1" stroke="#b8b8b8" stroke-width="0.9"/>
<line x1="143.9" y1="416.4" x2="146.4" y2="416.4" stroke="#b8b8b8" stroke-width="0.9"/>
<line x1="143.9" y1="386.8" x2="146.4" y2="386.8" stroke="#b8b8b8" stroke-width="0.9"/>
<line x1="143.9" y1="357.2" x2="146.4" y2="357.2" stroke="#b8b8b8" stroke-width="0.9"/>
<line x1="143.9" y1="327.5" x2="146.4" y2="327.5" stroke="#b8b8b8" stroke-width="0.9"/>
<line x1="146.40" y1="446.1" x2="146.40" y2="448.6" stroke="#b8b8b8" stroke-width="0.9"/>
<line x1="163.40" y1="446.1" x2="163.40" y2="448.6" stroke="#b8b8b8" stroke-width="0.9"/>
<line x1="180.40" y1="446.1" x2="180.40" y2="448.6" stroke="#b8b8b8" stroke-width="0.9"/>
<line x1="197.40" y1="446.1" x2="197.40" y2="448.6" stroke="#b8b8b8" stroke-width="0.9"/>
<line x1="214.40" y1="446.1" x2="214.40" y2="448.6" stroke="#b8b8b8" stroke-width="0.9"/>
<line x1="231.40" y1="446.1" x2="231.40" y2="448.6" stroke="#b8b8b8" stroke-width="0.9"/>
<line x1="248.40" y1="446.1" x2="248.40" y2="448.6" stroke="#b8b8b8" stroke-width="0.9"/>
<line x1="265.40" y1="446.1" x2="265.40" y2="448.6" stroke="#b8b8b8" stroke-width="0.9"/>
<line x1="282.40" y1="446.1" x2="282.40" y2="448.6" stroke="#b8b8b8" stroke-width="0.9"/>
<line x1="299.40" y1="446.1" x2="299.40" y2="448.6" stroke="#b8b8b8" stroke-width="0.9"/>
<line x1="316.40" y1="446.1" x2="316.40" y2="448.6" stroke="#b8b8b8" stroke-width="0.9"/>
<line x1="333.40" y1="446.1" x2="333.40" y2="448.6" stroke="#b8b8b8" stroke-width="0.9"/>
<line x1="350.40" y1="446.1" x2="350.40" y2="448.6" stroke="#b8b8b8" stroke-width="0.9"/>
<line x1="367.40" y1="446.1" x2="367.40" y2="448.6" stroke="#b8b8b8" stroke-width="0.9"/>
<line x1="384.40" y1="446.1" x2="384.40" y2="448.6" stroke="#b8b8b8" stroke-width="0.9"/>
<line x1="401.40" y1="446.1" x2="401.40" y2="448.6" stroke="#b8b8b8" stroke-width="0.9"/>
<line x1="418.40" y1="446.1" x2="418.40" y2="448.6" stroke="#b8b8b8" stroke-width="0.9"/>
<line x1="435.40" y1="446.1" x2="435.40" y2="448.6" stroke="#b8b8b8" stroke-width="0.9"/>
<line x1="452.40" y1="446.1" x2="452.40" y2="448.6" stroke="#b8b8b8" stroke-width="0.9"/>
<line x1="469.40" y1="446.1" x2="469.40" y2="448.6" stroke="#b8b8b8" stroke-width="0.9"/>
<line x1="486.40" y1="446.1" x2="486.40" y2="448.6" stroke="#b8b8b8" stroke-width="0.9"/>
<line x1="503.40" y1="446.1" x2="503.40" y2="448.6" stroke="#b8b8b8" stroke-width="0.9"/>
<line x1="520.40" y1="446.1" x2="520.40" y2="448.6" stroke="#b8b8b8" stroke-width="0.9"/>
<line x1="537.40" y1="446.1" x2="537.40" y2="448.6" stroke="#b8b8b8" stroke-width="0.9"/>
<line x1="554.40" y1="446.1" x2="554.40" y2="448.6" stroke="#b8b8b8" stroke-width="0.9"/>
<line x1="571.40" y1="446.1" x2="571.40" y2="448.6" stroke="#b8b8b8" stroke-width="0.9"/>
<line x1="588.40" y1="446.1" x2="588.40" y2="448.6" stroke="#b8b8b8" stroke-width="0.9"/>
<line x1="605.40" y1="446.1" x2="605.40" y2="448.6" stroke="#b8b8b8" stroke-width="0.9"/>
<line x1="622.40" y1="446.1" x2="622.40" y2="448.6" stroke="#b8b8b8" stroke-width="0.9"/>
<line x1="639.40" y1="446.1" x2="639.40" y2="448.6" stroke="#b8b8b8" stroke-width="0.9"/>
<line x1="656.40" y1="446.1" x2="656.40" y2="448.6" stroke="#b8b8b8" stroke-width="0.9"/>
<line x1="673.40" y1="446.1" x2="673.40" y2="448.6" stroke="#b8b8b8" stroke-width="0.9"/>
<line x1="690.40" y1="446.1" x2="690.40" y2="448.6" stroke="#b8b8b8" stroke-width="0.9"/>
<line x1="707.40" y1="446.1" x2="707.40" y2="448.6" stroke="#b8b8b8" stroke-width="0.9"/>
<line x1="724.40" y1="446.1" x2="724.40" y2="448.6" stroke="#b8b8b8" stroke-width="0.9"/>
<line x1="741.40" y1="446.1" x2="741.40" y2="448.6" stroke="#b8b8b8" stroke-width="0.9"/>
<line x1="758.40" y1="446.1" x2="758.40" y2="448.6" stroke="#b8b8b8" stroke-width="0.9"/>
<line x1="775.40" y1="446.1" x2="775.40" y2="448.6" stroke="#b8b8b8" stroke-width="0.9"/>
<line x1="792.40" y1="446.1" x2="792.40" y2="448.6" stroke="#b8b8b8" stroke-width="0.9"/>
<line x1="809.40" y1="446.1" x2="809.40" y2="448.6" stroke="#b8b8b8" stroke-width="0.9"/>
<line x1="826.40" y1="446.1" x2="826.40" y2="448.6" stroke="#b8b8b8" stroke-width="0.9"/>
<line x1="843.40" y1="446.1" x2="843.40" y2="448.6" stroke="#b8b8b8" stroke-width="0.9"/>
<line x1="860.40" y1="446.1" x2="860.40" y2="448.6" stroke="#b8b8b8" stroke-width="0.9"/>
<line x1="877.40" y1="446.1" x2="877.40" y2="448.6" stroke="#b8b8b8" stroke-width="0.9"/>
<line x1="894.40" y1="446.1" x2="894.40" y2="448.6" stroke="#b8b8b8" stroke-width="0.9"/>
<line x1="911.40" y1="446.1" x2="911.40" y2="448.6" stroke="#b8b8b8" stroke-width="0.9"/>
<line x1="928.40" y1="446.1" x2="928.40" y2="448.6" stroke="#b8b8b8" stroke-width="0.9"/>
<line x1="945.40" y1="446.1" x2="945.40" y2="448.6" stroke="#b8b8b8" stroke-width="0.9"/>
<text x="142.3" y="448.2" text-anchor="end" class="ax">-100 000</text>
<text x="142.3" y="418.6" text-anchor="end" class="ax">-50 000</text>
<text x="142.3" y="388.9" text-anchor="end" class="ax">0</text>
<text x="142.3" y="359.3" text-anchor="end" class="ax">50 000</text>
<text x="142.3" y="329.6" text-anchor="end" class="ax">100 000</text>
<text transform="translate(147.40,454.6) rotate(-45)" text-anchor="end" class="ax">01.2022</text>
<text transform="translate(164.40,454.6) rotate(-45)" text-anchor="end" class="ax">02.2022</text>
<text transform="translate(181.40,454.6) rotate(-45)" text-anchor="end" class="ax">03.2022</text>
<text transform="translate(198.40,454.6) rotate(-45)" text-anchor="end" class="ax">04.2022</text>
<text transform="translate(215.40,454.6) rotate(-45)" text-anchor="end" class="ax">05.2022</text>
<text transform="translate(232.40,454.6) rotate(-45)" text-anchor="end" class="ax">06.2022</text>
<text transform="translate(249.40,454.6) rotate(-45)" text-anchor="end" class="ax">07.2022</text>
<text transform="translate(266.40,454.6) rotate(-45)" text-anchor="end" class="ax">08.2022</text>
<text transform="translate(283.40,454.6) rotate(-45)" text-anchor="end" class="ax">09.2022</text>
<text transform="translate(300.40,454.6) rotate(-45)" text-anchor="end" class="ax">10.2022</text>
<text transform="translate(317.40,454.6) rotate(-45)" text-anchor="end" class="ax">11.2022</text>
<text transform="translate(334.40,454.6) rotate(-45)" text-anchor="end" class="ax">12.2022</text>
<text transform="translate(351.40,454.6) rotate(-45)" text-anchor="end" class="ax">01.2023</text>
<text transform="translate(368.40,454.6) rotate(-45)" text-anchor="end" class="ax">02.2023</text>
<text transform="translate(385.40,454.6) rotate(-45)" text-anchor="end" class="ax">03.2023</text>
<text transform="translate(402.40,454.6) rotate(-45)" text-anchor="end" class="ax">04.2023</text>
<text transform="translate(419.40,454.6) rotate(-45)" text-anchor="end" class="ax">05.2023</text>
<text transform="translate(436.40,454.6) rotate(-45)" text-anchor="end" class="ax">06.2023</text>
<text transform="translate(453.40,454.6) rotate(-45)" text-anchor="end" class="ax">07.2023</text>
<text transform="translate(470.40,454.6) rotate(-45)" text-anchor="end" class="ax">08.2023</text>
<text transform="translate(487.40,454.6) rotate(-45)" text-anchor="end" class="ax">09.2023</text>
<text transform="translate(504.40,454.6) rotate(-45)" text-anchor="end" class="ax">10.2023</text>
<text transform="translate(521.40,454.6) rotate(-45)" text-anchor="end" class="ax">11.2023</text>
<text transform="translate(538.40,454.6) rotate(-45)" text-anchor="end" class="ax">12.2023</text>
<text transform="translate(555.40,454.6) rotate(-45)" text-anchor="end" class="ax">01.2024</text>
<text transform="translate(572.40,454.6) rotate(-45)" text-anchor="end" class="ax">02.2024</text>
<text transform="translate(589.40,454.6) rotate(-45)" text-anchor="end" class="ax">03.2024</text>
<text transform="translate(606.40,454.6) rotate(-45)" text-anchor="end" class="ax">04.2024</text>
<text transform="translate(623.40,454.6) rotate(-45)" text-anchor="end" class="ax">05.2024</text>
<text transform="translate(640.40,454.6) rotate(-45)" text-anchor="end" class="ax">06.2024</text>
<text transform="translate(657.40,454.6) rotate(-45)" text-anchor="end" class="ax">07.2024</text>
<text transform="translate(674.40,454.6) rotate(-45)" text-anchor="end" class="ax">08.2024</text>
<text transform="translate(691.40,454.6) rotate(-45)" text-anchor="end" class="ax">09.2024</text>
<text transform="translate(708.40,454.6) rotate(-45)" text-anchor="end" class="ax">10.2024</text>
<text transform="translate(725.40,454.6) rotate(-45)" text-anchor="end" class="ax">11.2024</text>
<text transform="translate(742.40,454.6) rotate(-45)" text-anchor="end" class="ax">12.2024</text>
<text transform="translate(759.40,454.6) rotate(-45)" text-anchor="end" class="ax">01.2025</text>
<text transform="translate(776.40,454.6) rotate(-45)" text-anchor="end" class="ax">02.2025</text>
<text transform="translate(793.40,454.6) rotate(-45)" text-anchor="end" class="ax">03.2025</text>
<text transform="translate(810.40,454.6) rotate(-45)" text-anchor="end" class="ax">04.2025</text>
<text transform="translate(827.40,454.6) rotate(-45)" text-anchor="end" class="ax">05.2025</text>
<text transform="translate(844.40,454.6) rotate(-45)" text-anchor="end" class="ax">06.2025</text>
<text transform="translate(861.40,454.6) rotate(-45)" text-anchor="end" class="ax">07.2025</text>
<text transform="translate(878.40,454.6) rotate(-45)" text-anchor="end" class="ax">08.2025</text>
<text transform="translate(895.40,454.6) rotate(-45)" text-anchor="end" class="ax">09.2025</text>
<text transform="translate(912.40,454.6) rotate(-45)" text-anchor="end" class="ax">10.2025</text>
<text transform="translate(929.40,454.6) rotate(-45)" text-anchor="end" class="ax">11.2025</text>
<text transform="translate(946.40,454.6) rotate(-45)" text-anchor="end" class="ax">12.2025</text>
<polyline points="146.40,386.80 163.40,386.80 180.40,386.80 197.40,386.80 214.40,386.80 231.40,386.80 248.40,386.80 265.40,386.80 282.40,386.80 299.40,386.80 316.40,386.80 333.40,386.80 350.40,386.80 367.40,386.80 384.40,386.80 401.40,386.80 418.40,386.80 435.40,386.80 452.40,386.80 469.40,386.80 486.40,386.80 503.40,386.80 520.40,386.80 537.40,386.80 554.40,386.80 571.40,386.80 588.40,386.80 605.40,386.80 622.40,386.80 639.40,386.80 656.40,386.80 673.40,386.80 690.40,386.80 707.40,386.80 724.40,386.80 741.40,386.80 758.40,386.80 775.40,386.80 792.40,386.80 809.40,386.80 826.40,386.80 843.40,386.80 860.40,386.80 877.40,386.80 894.40,386.80 911.40,386.80 928.40,386.80 945.40,386.80" fill="none" stroke="#5ccbfb" stroke-width="1.2"/>
<rect x="161.30" y="384.70" width="4.2" height="4.2" fill="#45c3fb"/>
<rect x="178.30" y="384.70" width="4.2" height="4.2" fill="#45c3fb"/>
<rect x="467.30" y="384.70" width="4.2" height="4.2" fill="#45c3fb"/>
<polyline points="146.40,386.80 163.40,341.34 180.40,357.15 197.40,386.80 214.40,386.80 231.40,386.80 248.40,386.80 265.40,386.80 282.40,386.80 299.40,386.80 316.40,386.80 333.40,386.80 350.40,386.80 367.40,386.80 384.40,386.80 401.40,386.80 418.40,386.80 435.40,386.80 452.40,386.80 469.40,443.39 486.40,386.80 503.40,386.80 520.40,386.80 537.40,386.80 554.40,386.80 571.40,386.80 588.40,386.80 605.40,386.80 622.40,386.80 639.40,386.80 656.40,386.80 673.40,386.80 690.40,386.80 707.40,386.80 724.40,386.80 741.40,386.80 758.40,386.80 775.40,386.80 792.40,386.80 809.40,386.80 826.40,386.80 843.40,386.80 860.40,386.80 877.40,386.80 894.40,386.80 911.40,386.80 928.40,386.80 945.40,386.80" fill="none" stroke="#fb958b" stroke-width="1.2"/>
<path d="M197.40 386.90H452.40M486.40 386.90H945.40M144.90 386.90H146.40" fill="none" stroke="#e9b3b0" stroke-width="1.9"/>
<rect x="144.30" y="384.70" width="4.2" height="4.2" fill="#fd8173"/>
<rect x="161.30" y="339.24" width="4.2" height="4.2" fill="#fd8173"/>
<rect x="178.30" y="355.05" width="4.2" height="4.2" fill="#fd8173"/>
<rect x="195.30" y="384.70" width="4.2" height="4.2" fill="#fd8173"/>
<rect x="212.30" y="384.70" width="4.2" height="4.2" fill="#fd8173"/>
<rect x="229.30" y="384.70" width="4.2" height="4.2" fill="#fd8173"/>
<rect x="246.30" y="384.70" width="4.2" height="4.2" fill="#fd8173"/>
<rect x="263.30" y="384.70" width="4.2" height="4.2" fill="#fd8173"/>
<rect x="280.30" y="384.70" width="4.2" height="4.2" fill="#fd8173"/>
<rect x="297.30" y="384.70" width="4.2" height="4.2" fill="#fd8173"/>
<rect x="314.30" y="384.70" width="4.2" height="4.2" fill="#fd8173"/>
<rect x="331.30" y="384.70" width="4.2" height="4.2" fill="#fd8173"/>
<rect x="348.30" y="384.70" width="4.2" height="4.2" fill="#fd8173"/>
<rect x="365.30" y="384.70" width="4.2" height="4.2" fill="#fd8173"/>
<rect x="382.30" y="384.70" width="4.2" height="4.2" fill="#fd8173"/>
<rect x="399.30" y="384.70" width="4.2" height="4.2" fill="#fd8173"/>
<rect x="416.30" y="384.70" width="4.2" height="4.2" fill="#fd8173"/>
<rect x="433.30" y="384.70" width="4.2" height="4.2" fill="#fd8173"/>
<rect x="450.30" y="384.70" width="4.2" height="4.2" fill="#fd8173"/>
<rect x="467.30" y="441.29" width="4.2" height="4.2" fill="#fd8173"/>
<rect x="484.30" y="384.70" width="4.2" height="4.2" fill="#fd8173"/>
<rect x="501.30" y="384.70" width="4.2" height="4.2" fill="#fd8173"/>
<rect x="518.30" y="384.70" width="4.2" height="4.2" fill="#fd8173"/>
<rect x="535.30" y="384.70" width="4.2" height="4.2" fill="#fd8173"/>
<rect x="552.30" y="384.70" width="4.2" height="4.2" fill="#fd8173"/>
<rect x="569.30" y="384.70" width="4.2" height="4.2" fill="#fd8173"/>
<rect x="586.30" y="384.70" width="4.2" height="4.2" fill="#fd8173"/>
<rect x="603.30" y="384.70" width="4.2" height="4.2" fill="#fd8173"/>
<rect x="620.30" y="384.70" width="4.2" height="4.2" fill="#fd8173"/>
<rect x="637.30" y="384.70" width="4.2" height="4.2" fill="#fd8173"/>
<rect x="654.30" y="384.70" width="4.2" height="4.2" fill="#fd8173"/>
<rect x="671.30" y="384.70" width="4.2" height="4.2" fill="#fd8173"/>
<rect x="688.30" y="384.70" width="4.2" height="4.2" fill="#fd8173"/>
<rect x="705.30" y="384.70" width="4.2" height="4.2" fill="#fd8173"/>
<rect x="722.30" y="384.70" width="4.2" height="4.2" fill="#fd8173"/>
<rect x="739.30" y="384.70" width="4.2" height="4.2" fill="#fd8173"/>
<rect x="756.30" y="384.70" width="4.2" height="4.2" fill="#fd8173"/>
<rect x="773.30" y="384.70" width="4.2" height="4.2" fill="#fd8173"/>
<rect x="790.30" y="384.70" width="4.2" height="4.2" fill="#fd8173"/>
<rect x="807.30" y="384.70" width="4.2" height="4.2" fill="#fd8173"/>
<rect x="824.30" y="384.70" width="4.2" height="4.2" fill="#fd8173"/>
<rect x="841.30" y="384.70" width="4.2" height="4.2" fill="#fd8173"/>
<rect x="858.30" y="384.70" width="4.2" height="4.2" fill="#fd8173"/>
<rect x="875.30" y="384.70" width="4.2" height="4.2" fill="#fd8173"/>
<rect x="892.30" y="384.70" width="4.2" height="4.2" fill="#fd8173"/>
<rect x="909.30" y="384.70" width="4.2" height="4.2" fill="#fd8173"/>
<rect x="926.30" y="384.70" width="4.2" height="4.2" fill="#fd8173"/>
<rect x="943.30" y="384.70" width="4.2" height="4.2" fill="#fd8173"/>
<text x="144" y="336.2" class="dl">76 658 AED</text>
<text x="160.5" y="352.2" class="dl">50 000 AED</text>
<text x="448" y="438.8" class="dl">-95 432 AED</text>
<line x1="948.6" y1="394.4" x2="965.6" y2="394.4" stroke="#fb958b" stroke-width="1"/>
<rect x="955" y="392.2" width="4.4" height="4.4" fill="#fa8072"/>
<text x="966.3" y="396.8" class="lg">Net (actual)</text>
<line x1="948.6" y1="403.3" x2="965.6" y2="403.3" stroke="#5ccbfb" stroke-width="1"/>
<rect x="955" y="401.1" width="4.4" height="4.4" fill="#45c3fb"/>
<text x="966.3" y="405.7" class="lg">Net (plan)</text>
</svg>
<svg id="ui" width="1024" height="483" viewBox="0 0 1024 483" style="left:0;top:0;font-family:"Liberation Sans", Arial, sans-serif">
<text x="1.0" y="10.0" font-size="10.2" font-weight="bold" fill="#e2382b" textLength="3.6" lengthAdjust="spacingAndGlyphs">1</text>
<path d="M11.6 4.6A3.9 3.9 0 1 0 9.2 10.0H16.5" fill="none" stroke="#e2382b" stroke-width="1.15"/>
<path d="M10.2 5.4A2.1 2.1 0 1 0 9.0 8.2H16.5" fill="none" stroke="#e2382b" stroke-width="1.0"/>
<path d="M24.9 4.4H33M24.9 6.9H33M24.9 9.4H33" fill="none" stroke="#8b8455" stroke-width="1.0"/>
<path d="M4.6 20.1H10.4Q11 20.1 11 20.7V24.2Q11 24.8 10.4 24.8H9.6V21.6H4.0V20.7Q4 20.1 4.6 20.1Z" fill="#3a3a3a"/>
<path d="M2.9 21.9H8.7Q9.3 21.9 9.3 22.5V25.4Q9.3 26 8.7 26H5.6L4.3 27.3V26H2.9Q2.3 26 2.3 25.4V22.5Q2.3 21.9 2.9 21.9Z" fill="#3a3a3a"/>
<path d="M153.0 21.9L156.2 25.1M156.2 21.9L153.0 25.1" stroke="#555" stroke-width="0.8" fill="none"/>
<path d="M218.8 21.9L222.0 25.1M222.0 21.9L218.8 25.1" stroke="#555" stroke-width="0.8" fill="none"/>
<circle cx="727.4" cy="5.9" r="3.1" fill="none" stroke="#8a8a7a" stroke-width="0.8"/><path d="M729.7 8.3L731.4 10.3" stroke="#8a8a7a" stroke-width="0.9"/>
<path d="M887 4.6L890.4 8M890.4 4.6L887 8" stroke="#a9a48a" stroke-width="0.8" fill="none"/>
<path d="M901 9H908.3L907 7.4V5.4C907 3.9 906 2.9 904.65 2.9C903.3 2.9 902.3 3.9 902.3 5.4V7.4Z" fill="none" stroke="#4a4630" stroke-width="0.75" stroke-linejoin="round" stroke-linecap="round"/><path d="M903.8 10.3H905.5" fill="none" stroke="#4a4630" stroke-width="0.75" stroke-linejoin="round" stroke-linecap="round"/>
<path d="M919.9 4.9A3.9 3.9 0 1 1 919.6 7.6" fill="none" stroke="#4a4630" stroke-width="0.75" stroke-linejoin="round" stroke-linecap="round"/><path d="M923.4 4.3V6.7L925 7.8" fill="none" stroke="#4a4630" stroke-width="0.75" stroke-linejoin="round" stroke-linecap="round"/><path d="M918.8 3.6L919.4 5.6L921.3 5" fill="none" stroke="#4a4630" stroke-width="0.75" stroke-linejoin="round" stroke-linecap="round"/>
<path d="M941.20 2.80L942.38 5.48L945.29 5.77L943.10 7.72L943.73 10.58L941.20 9.10L938.67 10.58L939.30 7.72L937.11 5.77L940.02 5.48Z" fill="none" stroke="#4a4630" stroke-width="0.75" stroke-linejoin="round" stroke-linecap="round"/>
<circle cx="960.2" cy="4.7" r="1.7" fill="none" stroke="#4a4630" stroke-width="0.75" stroke-linejoin="round" stroke-linecap="round"/><path d="M957.4 10V8.4C957.4 7.3 958.5 6.8 960.2 6.8C961.9 6.8 963 7.3 963 8.4V10Z" fill="none" stroke="#4a4630" stroke-width="0.75" stroke-linejoin="round" stroke-linecap="round"/><path d="M958 3.6C956.8 3.4 956.1 4.2 956.3 5.3C956.4 5.9 956.9 6.3 957.4 6.4M957 7.2C955.8 7.4 955.2 7.9 955.2 8.8V10H957.2" fill="none" stroke="#4a4630" stroke-width="0.75" stroke-linejoin="round" stroke-linecap="round"/>
<path d="M1012 4.5H1019.2M1012 7H1019.2" stroke="#4a4630" stroke-width="0.7" fill="none"/><path d="M1014 8.9H1017L1015.5 10.7Z" fill="#4a4630"/>
<path d="M115 43.6H121.8" fill="none" stroke="#444" stroke-width="1.25"/><path d="M117.4 41.1L113.9 43.6L117.4 46.1Z" fill="#444"/>
<path d="M133 43.6H139.6" fill="none" stroke="#d2d2d2" stroke-width="1.1"/><path d="M137.5 41.3L140.9 43.6L137.5 45.9Z" fill="#d2d2d2"/>
<path d="M158.40 38.70L159.75 42.14L163.44 42.36L160.59 44.71L161.52 48.29L158.40 46.30L155.28 48.29L156.21 44.71L153.36 42.36L157.05 42.14Z" fill="none" stroke="#dcdcdc" stroke-width="0.8" stroke-linejoin="round"/>
<path d="M118.2 67.3A3 3 0 1 0 118.5 70.2" fill="none" stroke="#3db14a" stroke-width="1.25"/><path d="M119.3 65.4V68.4H116.3Z" fill="#3db14a"/>
<g transform="rotate(-45 980.7 43.5)"><path d="M979.7 41.5H977.9A2 2 0 0 0 977.9 45.5H979.7M981.7 41.5H983.5A2 2 0 0 1 983.5 45.5H981.7M979.4 43.5H982" fill="none" stroke="#9a9a9a" stroke-width="0.8" stroke-linecap="round"/></g>
<rect x="996.6" y="40.9" width="1.05" height="1.05" fill="#555"/>
<rect x="996.6" y="42.9" width="1.05" height="1.05" fill="#555"/>
<rect x="996.6" y="44.9" width="1.05" height="1.05" fill="#555"/>
<path d="M1010.8 40.9L1015.8 45.9M1015.8 40.9L1010.8 45.9" stroke="#7a7a7a" stroke-width="0.8" fill="none"/>
<rect x="201.7" y="92.9" width="4.8" height="4.3" fill="#e9e9e9" stroke="#8a8a8a" stroke-width="0.6"/><rect x="201.4" y="92.5" width="5.4" height="1.5" fill="#3a3a3a"/>
<rect x="282.6" y="92.9" width="4.8" height="4.3" fill="#e9e9e9" stroke="#8a8a8a" stroke-width="0.6"/><rect x="282.3" y="92.5" width="5.4" height="1.5" fill="#3a3a3a"/>
<path d="M301.6 92.6C300.3 94.2 300.3 96.2 301.6 97.8M308 92.6C309.3 94.2 309.3 96.2 308 97.8" fill="none" stroke="#1d3c6e" stroke-width="0.95"/><path d="M304.3 93.1V97.3L302.2 95.2ZM305.3 93.1V97.3L307.4 95.2Z" fill="#1d3c6e"/>
<circle cx="994.4" cy="122.4" r="3" fill="none" stroke="#777" stroke-width="0.7"/><path d="M996.5 124.6L998.2 126.2" stroke="#444" stroke-width="1.1"/>
</svg>
</body></html>
